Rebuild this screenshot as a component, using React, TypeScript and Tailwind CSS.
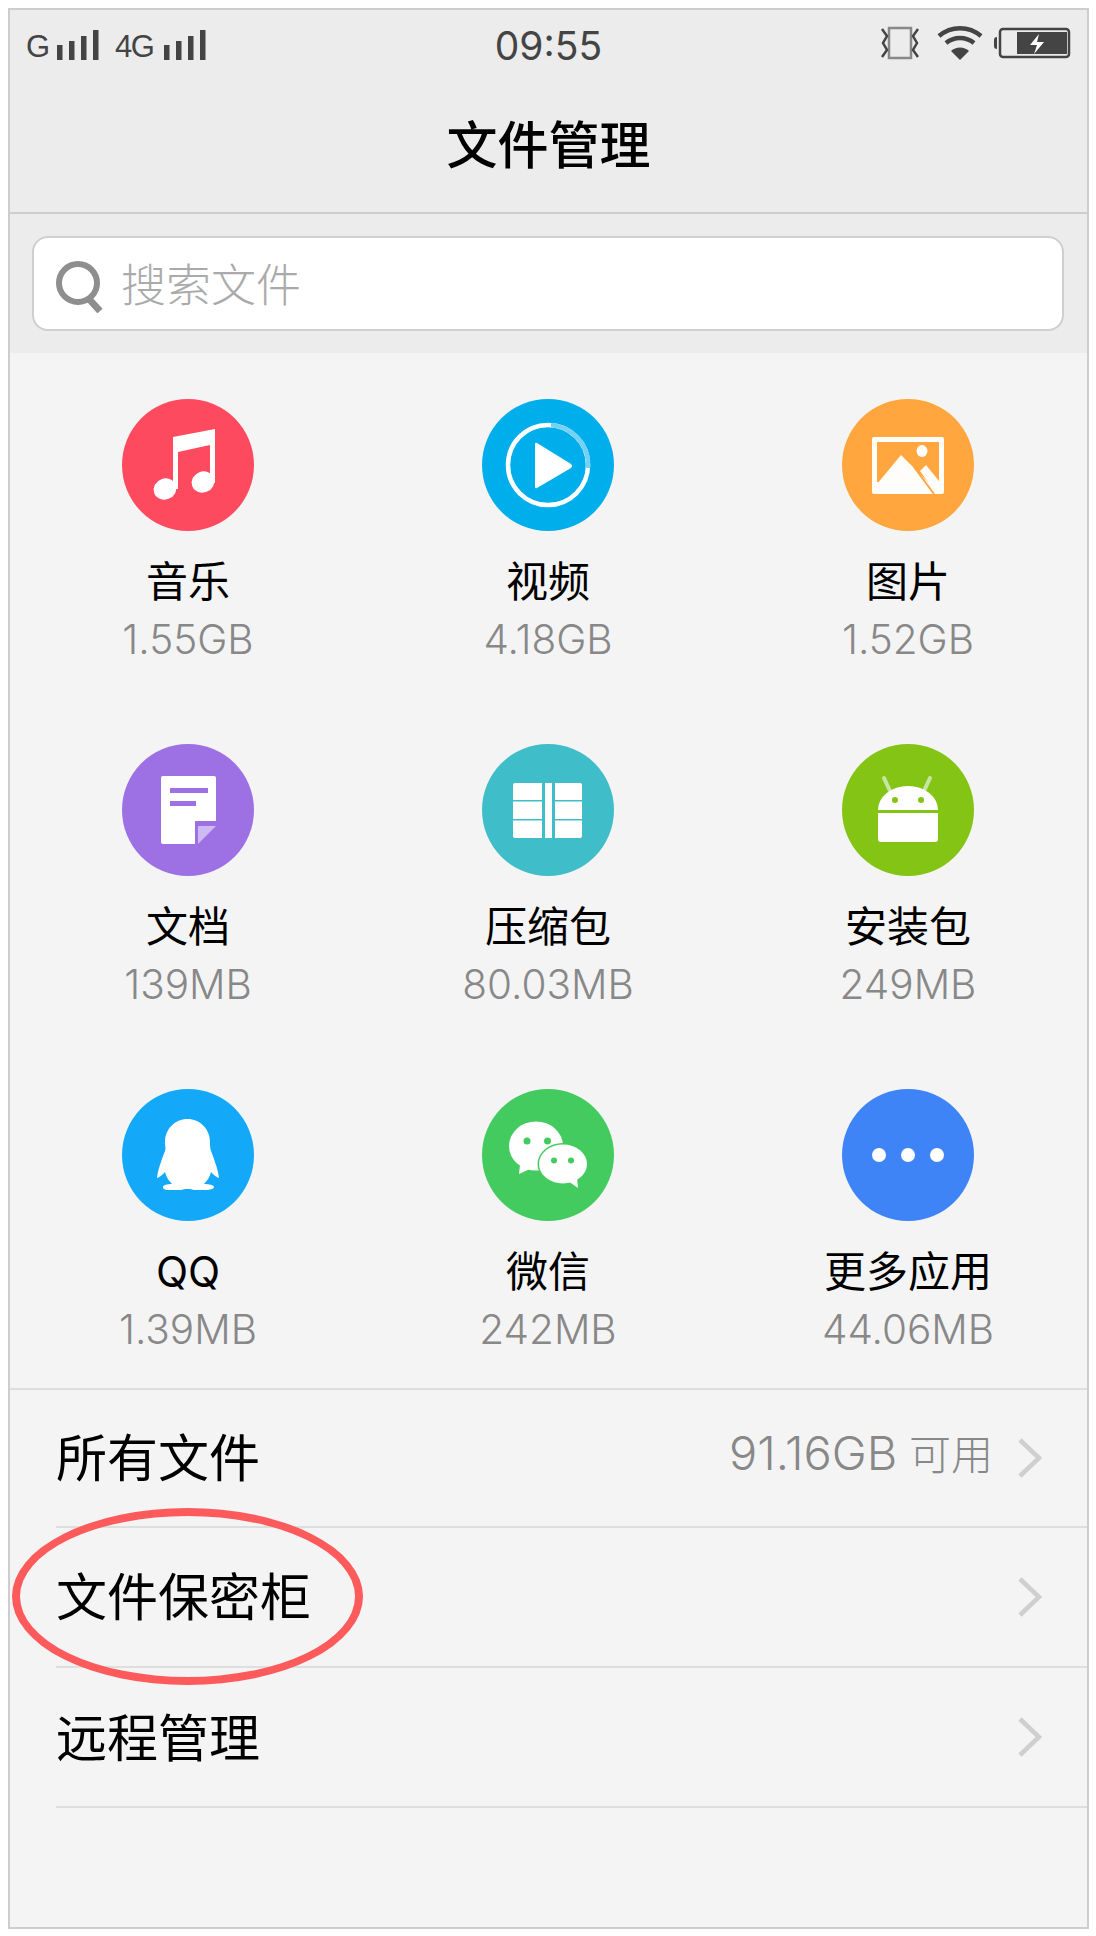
import React from "react";

const files: { name: string; size: string; icon: React.ReactNode; color: string }[] = [
  {
    name: "音乐",
    size: "1.55GB",
    color: "bg-[#fe4a5f]",
    icon: (
      <>
        <path d="M51 38 L93 30 V84 H88 V46 L56 53 V90 H51 Z" fill="#fff" />
        <ellipse cx="43" cy="90" rx="11.5" ry="10.5" fill="#fff" transform="rotate(-20 43 90)" />
        <ellipse cx="81" cy="83" rx="11.5" ry="10.5" fill="#fff" transform="rotate(-20 81 83)" />
      </>
    ),
  },
  {
    name: "视频",
    size: "4.18GB",
    color: "bg-[#00aeec]",
    icon: (
      <>
        <circle cx="66" cy="66" r="40" fill="none" stroke="#fff" strokeWidth="4.5" />
        <path d="M69 26 A40 40 0 0 1 106 69" fill="none" stroke="#74d2f6" strokeWidth="4.5" />
        <path d="M55 44 L89 65 Q91 67 89 69 L55 89 Q53 90 53 88 V45 Q53 43 55 44 Z" fill="#fff" />
      </>
    ),
  },
  {
    name: "图片",
    size: "1.52GB",
    color: "bg-[#ffa63e]",
    icon: (
      <>
        <rect x="30" y="38" width="72" height="57" rx="2" fill="#fffdfa" />
        <rect x="35" y="43" width="62" height="40" fill="#ffa63e" />
        <path d="M59 56 L35 85 V90 H92 L88 85 Z" fill="#fffdfa" />
        <path d="M78 72 L84 66 L97 82 V90 H91 Z" fill="#fffdfa" />
        <path d="M72 68 L92 95" stroke="#ffa63e" strokeWidth="2" fill="none" />
        <ellipse cx="80" cy="52" rx="5.5" ry="6" fill="#fffdfa" />
      </>
    ),
  },
  {
    name: "文档",
    size: "139MB",
    color: "bg-[#9d70e4]",
    icon: (
      <>
        <path d="M41 32 H92 Q94 32 94 34 V77 H73 V100 H41 Q39 100 39 98 V34 Q39 32 41 32 Z" fill="#fff" />
        <path d="M76 82 H94 L76 100 Z" fill="#cdb9f3" />
        <rect x="48" y="44" width="38" height="5" fill="#9d70e4" />
        <rect x="48" y="57" width="26" height="5" fill="#9d70e4" />
      </>
    ),
  },
  {
    name: "压缩包",
    size: "80.03MB",
    color: "bg-[#3fbdc9]",
    icon: (
      <>
        <rect x="31" y="39" width="69" height="55" rx="2" fill="#fff" />
        <rect x="60" y="39" width="3" height="55" fill="#3fbdc9" />
        <rect x="70" y="39" width="3" height="55" fill="#3fbdc9" />
        <rect x="31" y="56" width="29" height="1.5" fill="#3fbdc9" />
        <rect x="73" y="56" width="27" height="1.5" fill="#3fbdc9" />
        <rect x="31" y="75" width="29" height="1.5" fill="#3fbdc9" />
        <rect x="73" y="75" width="27" height="1.5" fill="#3fbdc9" />
      </>
    ),
  },
  {
    name: "安装包",
    size: "249MB",
    color: "bg-[#84c414]",
    icon: (
      <>
        <path d="M42 34 L48 47 M88 34 L82 47" stroke="#c6e6a2" strokeWidth="4" strokeLinecap="round" fill="none" />
        <path d="M36 66 A30 24 0 0 1 96 66 Z" fill="#fff" />
        <path d="M36 69 H96 V95 Q96 98 93 98 H39 Q36 98 36 95 Z" fill="#fff" />
        <circle cx="53" cy="56" r="3" fill="#84c414" />
        <circle cx="79" cy="56" r="3" fill="#84c414" />
      </>
    ),
  },
  {
    name: "QQ",
    size: "1.39MB",
    color: "bg-[#14a9f8]",
    icon: (
      <path
        d="M65.5 30 C78 30 88 40 88 53 C88 57 88 59 89 62 C92 70 96 80 97 89 C94 88 91 85 89 83 C88 88 85 92 82 95 C87 95 92 96 92 98 C92 100 88 101 84 101 H72 L68 100 H63 L59 101 H46 C42 101 41 99 41 98 C41 96 45 95 50 95 C47 92 44 88 43 83 C41 85 38 88 35 89 C36 80 40 70 43 62 C44 59 43 57 43 53 C43 40 53 30 65.5 30 Z"
        fill="#fff"
      />
    ),
  },
  {
    name: "微信",
    size: "242MB",
    color: "bg-[#44cb5f]",
    icon: (
      <>
        <ellipse cx="54" cy="57" rx="27" ry="24.5" fill="#fff" />
        <path d="M38 76 L37 85 L48 80 Z" fill="#fff" />
        <ellipse cx="81" cy="75" rx="25.5" ry="21" fill="#44cb5f" />
        <ellipse cx="81" cy="75" rx="24" ry="19.5" fill="#fff" />
        <path d="M86 92 L96 99 L95 89 Z" fill="#fff" />
        <circle cx="45" cy="52" r="3.5" fill="#44cb5f" />
        <circle cx="65.5" cy="52" r="3.5" fill="#44cb5f" />
        <circle cx="72" cy="71.5" r="3" fill="#44cb5f" />
        <circle cx="89" cy="71.5" r="3" fill="#44cb5f" />
      </>
    ),
  },
  {
    name: "更多应用",
    size: "44.06MB",
    color: "bg-[#3f84f6]",
    icon: (
      <>
        <circle cx="37" cy="66" r="7" fill="#fff" />
        <circle cx="66" cy="66" r="7" fill="#fff" />
        <circle cx="95" cy="66" r="7" fill="#fff" />
      </>
    ),
  },
];

const Signal = () => (
  <svg width="42" height="32" viewBox="0 0 42 32" className="block">
    <rect x="0" y="16" width="5.5" height="15" fill="#444" />
    <rect x="12" y="12" width="5.5" height="19" fill="#444" />
    <rect x="24" y="7" width="5.5" height="24" fill="#444" />
    <rect x="36" y="1" width="5.5" height="30" fill="#444" />
  </svg>
);

const Chevron = () => (
  <svg width="26" height="40" viewBox="0 0 26 40" className="block">
    <path d="M3 2 L22 20 L3 38" fill="none" stroke="#cfcfcf" strokeWidth="4.5" />
  </svg>
);

export default function App() {
  return (
    <div className="w-[1096px] h-[1936px] bg-white pt-2 pl-2 pr-[7px] pb-[7px] font-['Inter','Noto_Sans_CJK_SC',sans-serif]">
      <div className="h-full border-2 border-[#cdcdcd] bg-[#f4f4f4] flex flex-col">
        <div className="bg-[#ececec] h-[204px] border-b-2 border-[#cdcdcd] shrink-0">
          <div className="h-[60px] pt-[9px] px-4 grid grid-cols-3 items-center">
            <div className="flex items-end text-[#444] text-[31px] leading-[28px] font-['Liberation_Sans',sans-serif]">
              <span className="w-[31px]">G</span>
              <Signal />
              <span className="ml-[16px] w-[49px] tracking-[-1.5px]">4G</span>
              <Signal />
            </div>
            <div className="mt-[2px] text-center text-[39px] leading-[46px] text-[#444]">09:55</div>
            <div className="flex justify-end">
              <svg width="192" height="40" viewBox="0 0 192 40" className="block">
                <rect x="10" y="3" width="22" height="30" fill="none" stroke="#888" strokeWidth="2.5" />
                <path d="M3 4 L8 11 L4 18 L8 25 L3 32 M39 4 L34 11 L38 18 L34 25 L39 32" fill="none" stroke="#444" strokeWidth="2.5" />
                <path d="M60 11 A32 32 0 0 1 102 11" fill="none" stroke="#444" strokeWidth="4.5" />
                <path d="M67 18 A22 22 0 0 1 95 18" fill="none" stroke="#444" strokeWidth="4.5" />
                <path d="M81 35 L72 26 A13 13 0 0 1 90 26 Z" fill="#444" />
                <rect x="121" y="4" width="69" height="28" rx="3" fill="none" stroke="#444" strokeWidth="2.5" />
                <path d="M118 12 Q115 12 115 15 V21 Q115 24 118 24 Z" fill="#444" />
                <rect x="138" y="7" width="50" height="22" fill="#444" />
                <path d="M160 9 L151 20 H158 L155 29 L165 17 H158 Z" fill="#fff" />
              </svg>
            </div>
          </div>
          <h1 className="mt-[46px] text-center text-[51px] leading-[60px] font-medium text-black">文件管理</h1>
        </div>

        <div className="bg-[#ececec] h-[139px] shrink-0 pl-[22px] pr-[23px] pt-[22px]">
          <div className="h-[95px] rounded-[16px] border-2 border-[#cfcfcf] bg-white flex items-center pl-[21px]">
            <svg width="50" height="52" viewBox="0 0 50 52" className="block shrink-0 mt-[6px]">
              <circle cx="23" cy="22" r="19" fill="none" stroke="#8e8e8e" strokeWidth="6" />
              <path d="M34 38 L45 50" stroke="#8e8e8e" strokeWidth="7" fill="none" />
            </svg>
            <span className="ml-[16px] mt-[4px] text-[45px] leading-[56px] font-light text-[#aaaaaa]">搜索文件</span>
          </div>
        </div>

        <div className="grid grid-cols-[360px_360px_360px] -ml-[2px] h-[1035px] shrink-0 pt-[46px] content-start">
          {files.map((f) => (
            <div key={f.name} className="h-[345px] flex flex-col items-center">
              <div className={`w-[132px] h-[132px] rounded-full shrink-0 ${f.color}`}>
                <svg width="132" height="132" viewBox="0 0 132 132" className="block">
                  {f.icon}
                </svg>
              </div>
              <div className="mt-[26px] text-[42px] leading-[50px] text-black">{f.name}</div>
              <div className="mt-[8px] text-[40.5px] leading-[50px] font-light text-[#888888]">{f.size}</div>
            </div>
          ))}
        </div>

        <div className="border-t-2 border-[#dedede] shrink-0">
          <div className="ml-[46px] h-[138px] border-b-2 border-[#dedede] flex items-center justify-between pr-[44px]">
            <span className="mt-[2px] text-[51px] leading-[60px] text-black">所有文件</span>
            <div className="flex items-center gap-[24px]">
              <span className="font-light text-[#888888] leading-[50px]">
                <span className="text-[47px]">91.16GB</span>
                <span className="text-[42px]"> 可用</span>
              </span>
              <Chevron />
            </div>
          </div>
          <div className="relative ml-[46px] h-[140px] border-b-2 border-[#dedede] flex items-center justify-between pr-[44px]">
            <span className="mt-[2px] text-[51px] leading-[60px] text-black">文件保密柜</span>
            <Chevron />
            <div className="absolute left-[-44px] top-[-20px] w-[351px] h-[177px] rounded-[50%] border-[8px] border-[#fd5a5c]" />
          </div>
          <div className="ml-[46px] h-[140px] border-b-2 border-[#dedede] flex items-center justify-between pr-[44px]">
            <span className="mt-[3px] text-[51px] leading-[60px] text-black">远程管理</span>
            <Chevron />
          </div>
        </div>
      </div>
    </div>
  );
}
